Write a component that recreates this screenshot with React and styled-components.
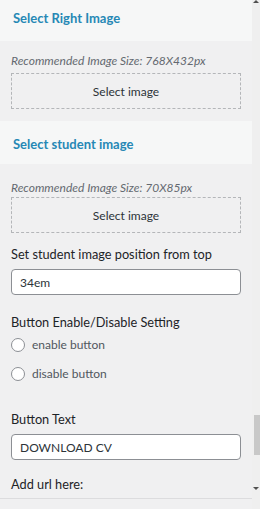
import React from 'react'
import styled, { createGlobalStyle } from 'styled-components'

const Global = createGlobalStyle`
  html, body {
    margin: 0;
    padding: 0;
    background: #f0f0f1;
  }
  body {
    font-family: "Lato", "Noto Sans", sans-serif;
    color: #1d2327;
  }
`

const Frame = styled.div`
  width: 260px;
  height: 509px;
  overflow: hidden;
  display: flex;
  background: #f0f0f1;
`

const Panel = styled.div`
  flex: 1;
  display: flex;
  flex-direction: column;
`

const SectionHeader = styled.div`
  height: ${p => p.$h}px;
  margin-top: ${p => p.$mt || 0}px;
  padding: ${p => p.$pt}px 13px 0;
  box-sizing: border-box;
  background: #f6f7f7;
  color: #2688b5;
  font-size: 13px;
  font-weight: 700;
  line-height: 16px;
`

const Body = styled.div`
  padding: 0 11px;
  display: flex;
  flex-direction: column;
`

const Hint = styled.div`
  margin-top: ${p => p.$mt}px;
  font-size: 12px;
  font-style: italic;
  color: #646970;
  line-height: 14px;
`

const DropZone = styled.div`
  margin-top: ${p => p.$mt}px;
  height: 36px;
  border: 1px dashed #b4b6b9;
  box-sizing: border-box;
  display: flex;
  align-items: center;
  justify-content: center;
  font-size: 12px;
  color: #2c3338;
`

const Label = styled.div`
  margin-top: ${p => p.$mt}px;
  font-size: 12.75px;
  line-height: 16px;
  color: #1d2327;
`

const TextInput = styled.div`
  margin-top: ${p => p.$mt}px;
  height: 26px;
  box-sizing: border-box;
  border: 1px solid #8c8f94;
  border-radius: 4px;
  background: #fff;
  padding: 0 8px;
  display: flex;
  align-items: center;
  font-size: 12px;
  color: #2c3338;
`

const RadioRow = styled.label`
  margin-top: ${p => p.$mt}px;
  display: flex;
  align-items: center;
  gap: 7px;
  font-size: 12px;
  line-height: 16px;
  color: #50575e;
`

const RadioCircle = styled.span`
  width: 14px;
  height: 14px;
  box-sizing: border-box;
  border: 1px solid #8c8f94;
  border-radius: 50%;
  background: #fff;
  flex-shrink: 0;
`

const BottomRule = styled.div`
  margin-top: 6px;
  border-top: 1px solid #dcdcde;
`

const Scrollbar = styled.div`
  width: 8px;
  position: relative;
  background: #efefef;
`

const Thumb = styled.div`
  position: absolute;
  left: 2px;
  right: 0;
  top: 415px;
  height: 40px;
  background: #c8c8c8;
`

const Arrow = styled.div`
  position: absolute;
  right: 1px;
  width: 0;
  height: 0;
  border-left: 3px solid transparent;
  border-right: 3px solid transparent;
  ${p => (p.$up ? 'top: 0; border-bottom: 3px solid #505050;' : 'top: 487px; border-top: 3px solid #505050;')}
`

export default function App() {
  return (
    <Frame>
      <Global />
      <Panel>
        <SectionHeader $h={41} $pt={10}>Select Right Image</SectionHeader>
        <Body>
          <Hint $mt={13}>Recommended Image Size: 768X432px</Hint>
          <DropZone $mt={5}>Select image</DropZone>
        </Body>
        <SectionHeader $h={43} $pt={15} $mt={12}>Select student image</SectionHeader>
        <Body>
          <Hint $mt={17}>Recommended Image Size: 70X85px</Hint>
          <DropZone $mt={2}>Select image</DropZone>
          <Label $mt={13}>Set student image position from top</Label>
          <TextInput $mt={7}>34em</TextInput>
          <Label $mt={19}>Button Enable/Disable Setting</Label>
          <RadioRow $mt={7}>
            <RadioCircle />
            enable button
          </RadioRow>
          <RadioRow $mt={13}>
            <RadioCircle />
            disable button
          </RadioRow>
          <Label $mt={29}>Button Text</Label>
          <TextInput $mt={7}>DOWNLOAD CV</TextInput>
          <Label $mt={16}>Add url here:</Label>
        </Body>
        <BottomRule />
      </Panel>
      <Scrollbar>
        <Arrow $up />
        <Thumb />
        <Arrow />
      </Scrollbar>
    </Frame>
  )
}
